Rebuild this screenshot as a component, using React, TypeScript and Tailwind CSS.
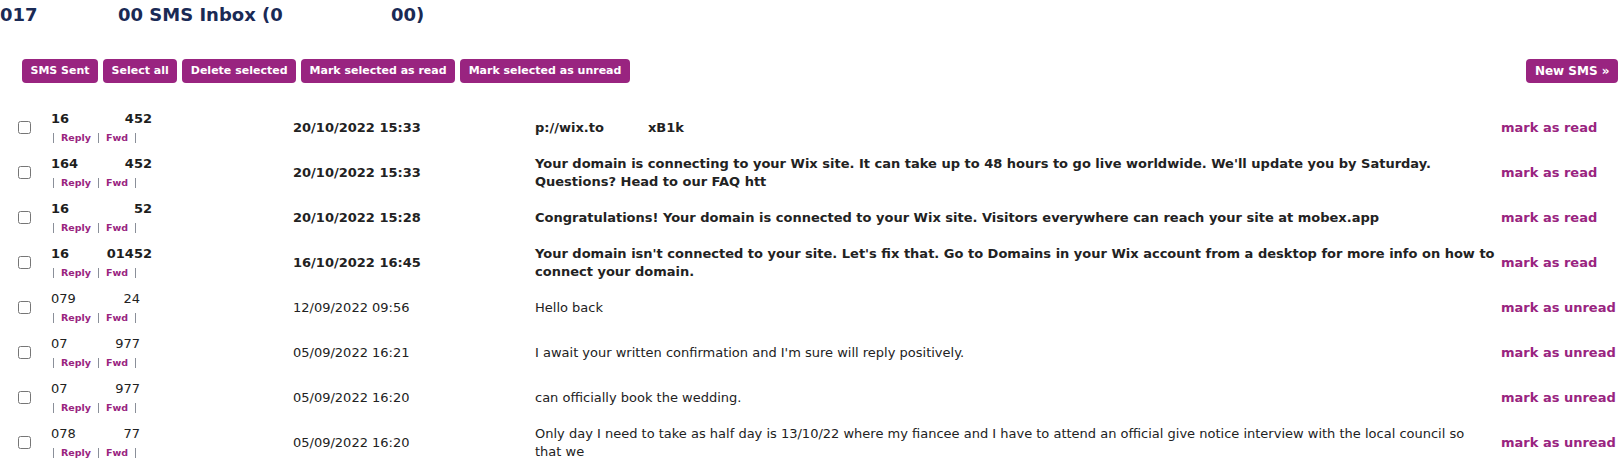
import React from "react";

type Row = {
  l: string;
  r: string;
  date: string;
  msg: React.ReactNode;
  unread: boolean;
};

const rows: Row[] = [
  {
    l: "16",
    r: "452",
    date: "20/10/2022 15:33",
    msg: (
      <>
        p://wix.to<span className="inline-block w-[44px]" />xB1k
      </>
    ),
    unread: true,
  },
  {
    l: "164",
    r: "452",
    date: "20/10/2022 15:33",
    msg: "Your domain is connecting to your Wix site. It can take up to 48 hours to go live worldwide. We'll update you by Saturday. Questions? Head to our FAQ htt",
    unread: true,
  },
  {
    l: "16",
    r: "52",
    date: "20/10/2022 15:28",
    msg: "Congratulations! Your domain is connected to your Wix site. Visitors everywhere can reach your site at mobex.app",
    unread: true,
  },
  {
    l: "16",
    r: "01452",
    date: "16/10/2022 16:45",
    msg: "Your domain isn't connected to your site. Let's fix that. Go to Domains in your Wix account from a desktop for more info on how to connect your domain.",
    unread: true,
  },
  { l: "079", r: "24", date: "12/09/2022 09:56", msg: "Hello back", unread: false },
  {
    l: "07",
    r: "977",
    date: "05/09/2022 16:21",
    msg: "I await your written confirmation and I'm sure will reply positively.",
    unread: false,
  },
  { l: "07", r: "977", date: "05/09/2022 16:20", msg: "can officially book the wedding.", unread: false },
  {
    l: "078",
    r: "77",
    date: "05/09/2022 16:20",
    msg: (
      <>
        Only day I need to take as half day is 13/10/22 where my fiancee and I have to attend an official give notice
        interview with the local council so
        <br />
        that we
      </>
    ),
    unread: false,
  },
];

const btn =
  "h-[24px] px-[8.5px] rounded-[4px] bg-[#992480] text-white font-bold text-[11px] flex items-center whitespace-nowrap";

function Bar() {
  return <div className="w-px h-[10px] bg-[#8a8f99]" />;
}

export default function App() {
  return (
    <div
      className="w-[1621px] h-[475px] bg-white text-[#222] overflow-hidden"
      style={{ fontFamily: '"DejaVu Sans", Verdana, sans-serif' }}
    >
      <div className="flex h-[30px] leading-[30px] text-[18px] font-bold text-[#1a2a55] whitespace-nowrap">
        <span className="w-[118px]">017</span>
        <span className="w-[273px]">00 SMS Inbox (0</span>
        <span>00)</span>
      </div>

      <div className="mt-[29px] flex justify-between pl-[22px] pr-[3px]">
        <div className="flex gap-[5px]">
          <button className={btn}>SMS Sent</button>
          <button className={btn}>Select all</button>
          <button className={btn}>Delete selected</button>
          <button className={btn}>Mark selected as read</button>
          <button className={btn}>Mark selected as unread</button>
        </div>
        <button className="h-[24px] px-[8.5px] rounded-[4px] bg-[#992480] text-white font-bold text-[12px] flex items-center whitespace-nowrap">
          New SMS »
        </button>
      </div>

      <div className="mt-[22px] pl-[18px] flex flex-col">
        {rows.map((row, i) => (
          <div key={i} className="h-[45px] flex items-center text-[13px]">
            <div className="w-[33px] flex items-center">
              <input type="checkbox" className="m-0 w-[13px] h-[13px]" />
            </div>
            <div className="w-[242px] flex flex-col gap-[2px]">
              <div
                className={`flex justify-between leading-[18px] ${
                  row.unread ? "font-bold w-[101px] text-[#1e1e1e]" : "w-[89px]"
                }`}
              >
                <span>{row.l}</span>
                <span>{row.r}</span>
              </div>
              <div className="flex items-center gap-[7px] h-[14px] mt-[1px] ml-[2px] text-[9.5px] font-bold text-[#992480]">
                <Bar />
                <span>Reply</span>
                <Bar />
                <span>Fwd</span>
                <Bar />
              </div>
            </div>
            <div className={`w-[242px] leading-[18px] ${row.unread ? "font-bold" : ""}`}>{row.date}</div>
            <div className={`w-[966px] pr-[2px] leading-[18px] ${row.unread ? "font-bold" : ""}`}>{row.msg}</div>
            <div className="text-[13px] font-bold text-[#992480] whitespace-nowrap">
              {row.unread ? "mark as read" : "mark as unread"}
            </div>
          </div>
        ))}
      </div>
    </div>
  );
}
